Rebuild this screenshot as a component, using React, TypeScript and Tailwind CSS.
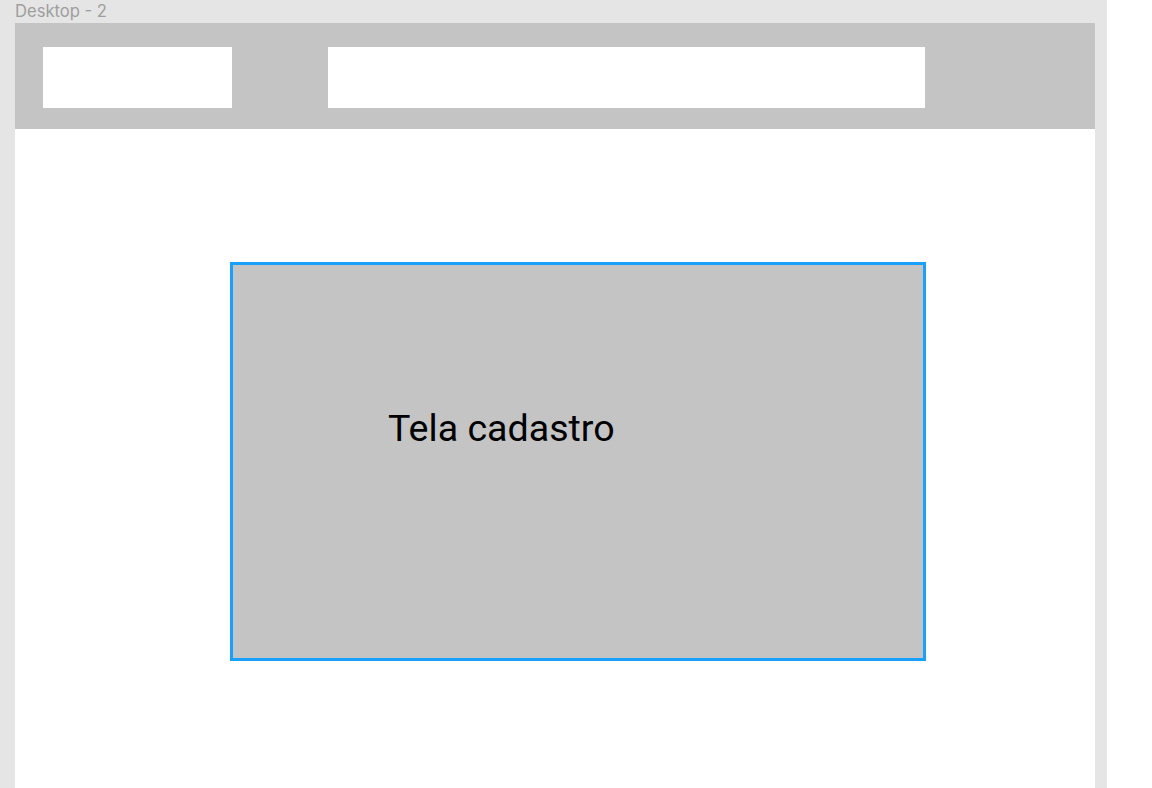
import React from "react";

export default function App() {
  return (
    <div className="flex w-[1152px] h-[788px] overflow-hidden bg-white">
      <div className="flex flex-col w-[1107px] h-full bg-[#e5e5e5] pl-[15px]">
        <div className="h-[23px] flex items-start pt-[1px] text-[16.6px] leading-[20px] text-[#9e9e9e]" style={{ fontFamily: "Inter, 'Noto Sans', sans-serif" }}>
          Desktop - 2
        </div>
        <div className="flex flex-col w-[1080px] flex-1 bg-white">
          <div className="flex h-[106px] bg-[#c4c4c4] pl-[28px] pt-[24px] gap-[96px]">
            <div className="w-[189px] h-[61px] bg-white" />
            <div className="w-[597px] h-[61px] bg-white" />
          </div>
          <div className="pl-[215px] pt-[133px]">
            <div className="w-[696px] h-[399px] border-[3px] border-[#18a0fb] bg-[#c4c4c4] pl-[155px] pt-[142px]">
              <div className="text-[37.6px] leading-[42px] text-black" style={{ fontFamily: "Roboto, 'Noto Sans', sans-serif" }}>
                Tela cadastro
              </div>
            </div>
          </div>
        </div>
      </div>
      <div className="flex-1 bg-white" />
    </div>
  );
}
